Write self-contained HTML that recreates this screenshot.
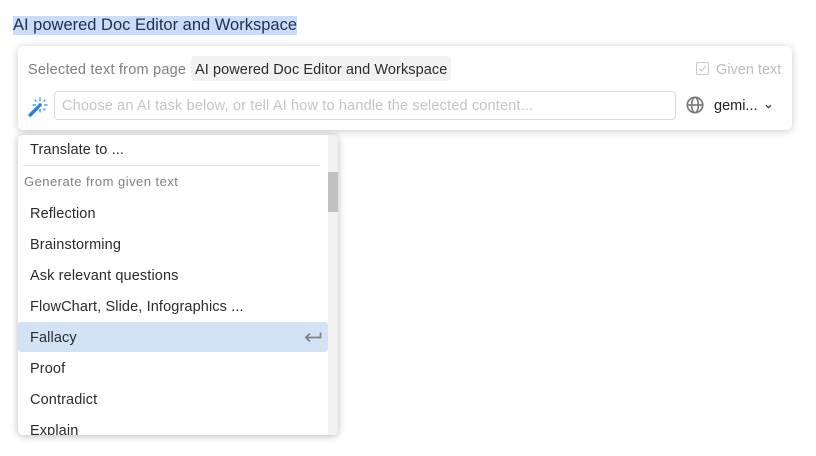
<!DOCTYPE html>
<html>
<head>
<meta charset="utf-8">
<style>
html,body{margin:0;padding:0;background:#fff;}
body{width:816px;height:456px;overflow:hidden;position:relative;font-family:"Liberation Sans",sans-serif;}
.a{position:absolute;white-space:nowrap;}
#sel{left:13px;top:16px;height:19px;width:284px;background:#cbdcfb;}
#title{left:13px;top:16px;line-height:19px;font-size:16.5px;color:#1d2f4f;}
#panel{left:18px;top:46px;width:774px;height:84px;background:#fff;border-radius:5px;box-shadow:0 1px 8px rgba(0,0,0,.22);}
.t{font-size:14.5px;line-height:18px;}
#lbl{left:28px;top:61px;color:#7f7f7f;letter-spacing:.22px;}
#chip{left:191px;top:56px;width:260px;height:25px;background:#f2f2f2;border-radius:4px;}
#chipt{left:195px;top:61px;color:#2b2b2b;letter-spacing:.08px;}
#chk{left:696px;top:62px;width:11px;height:11px;border:1px solid #c9c9c9;border-radius:2px;}
#given{left:716px;top:61px;color:#bdbdbd;}
#inp{left:54px;top:91px;width:620px;height:27px;border:1px solid #d9d9d9;border-radius:4px;background:#fff;}
#ph{left:62px;top:97px;color:#c4c4c4;letter-spacing:.16px;}
#gem{left:714px;top:97px;color:#222;}
#menu{left:18px;top:135px;width:320px;height:300px;background:#fff;border-radius:5px;box-shadow:0 1px 8px rgba(0,0,0,.28);overflow:hidden;}
#track{position:absolute;left:310px;top:0;width:10px;height:300px;background:#f1f1f1;}
#thumb{position:absolute;left:310px;top:37px;width:10px;height:40px;background:#c1c1c1;}
#hl{position:absolute;left:0;top:187px;width:310px;height:30px;background:#d2e3f6;border-radius:3px;}
#hr{position:absolute;left:5px;top:30px;width:297px;height:1px;background:#e2e2e2;}
.i{position:absolute;left:12px;font-size:14.5px;letter-spacing:.12px;line-height:18px;color:#2b2b2b;white-space:nowrap;}
#gen{position:absolute;left:6px;top:38px;font-size:13px;letter-spacing:.47px;line-height:18px;color:#7f7f7f;white-space:nowrap;}
svg{position:absolute;}
</style>
</head>
<body>
<div class="a" id="sel"></div>
<div class="a" id="title">AI powered Doc Editor and Workspace</div>
<div class="a" id="panel"></div>
<div class="a t" id="lbl">Selected text from page</div>
<div class="a" id="chip"></div>
<div class="a t" id="chipt">AI powered Doc Editor and Workspace</div>
<div class="a" id="chk"></div>
<svg style="left:696px;top:62px" width="13" height="13" viewBox="0 0 13 13"><path d="M3.2 6.5 L5.6 9 L10 4" fill="none" stroke="#c4c4c4" stroke-width="1"/></svg>
<div class="a t" id="given">Given text</div>
<svg style="left:28px;top:96px" width="21" height="21" viewBox="0 0 21 21">
<path d="M2.2 19 L10 11.2" stroke="#1f80e6" stroke-width="3.4" stroke-linecap="round" fill="none"/>
<circle cx="12" cy="9" r="1.8" fill="#1f80e6"/>
<path d="M12 1.5V5M12 13V16.5M4.5 9H8M16 9H19.5M6.8 3.8L8.5 5.5M15.5 12.5L17.2 14.2M17.2 3.8L15.5 5.5" stroke="#4ba0f0" stroke-width="1.5" fill="none"/>
</svg>
<div class="a" id="inp"></div>
<div class="a t" id="ph">Choose an AI task below, or tell AI how to handle the selected content...</div>
<svg style="left:686px;top:96px" width="18" height="18" viewBox="0 0 18 18" fill="none" stroke="#7a7a7a" stroke-width="1.7">
<circle cx="9" cy="9" r="7.7"/><ellipse cx="9" cy="9" rx="3.4" ry="7.7"/><path d="M1.4 9H16.6"/>
</svg>
<div class="a t" id="gem">gemi...</div>
<svg style="left:764px;top:103px" width="9" height="7" viewBox="0 0 9 7"><path d="M2 2.2 L4.5 4.7 L7 2.2" fill="none" stroke="#333" stroke-width="1.2"/></svg>
<div class="a" id="menu">
<div id="track"></div>
<div id="thumb"></div>
<div id="hl"></div>
<div class="i" style="top:6px">Translate to ...</div>
<div id="hr"></div>
<div id="gen">Generate from given text</div>
<div class="i" style="top:70px">Reflection</div>
<div class="i" style="top:101px">Brainstorming</div>
<div class="i" style="top:132px">Ask relevant questions</div>
<div class="i" style="top:163px">FlowChart, Slide, Infographics ...</div>
<div class="i" style="top:194px">Fallacy</div>
<div class="i" style="top:225px">Proof</div>
<div class="i" style="top:256px">Contradict</div>
<div class="i" style="top:287px">Explain</div>
<svg style="left:286px;top:196px" width="18" height="12" viewBox="0 0 18 12"><path d="M16.5 1.5V6.5H2M6 2.5L1.8 6.5L6 10.5" fill="none" stroke="#808080" stroke-width="1.7"/></svg>
</div>
</body>
</html>
